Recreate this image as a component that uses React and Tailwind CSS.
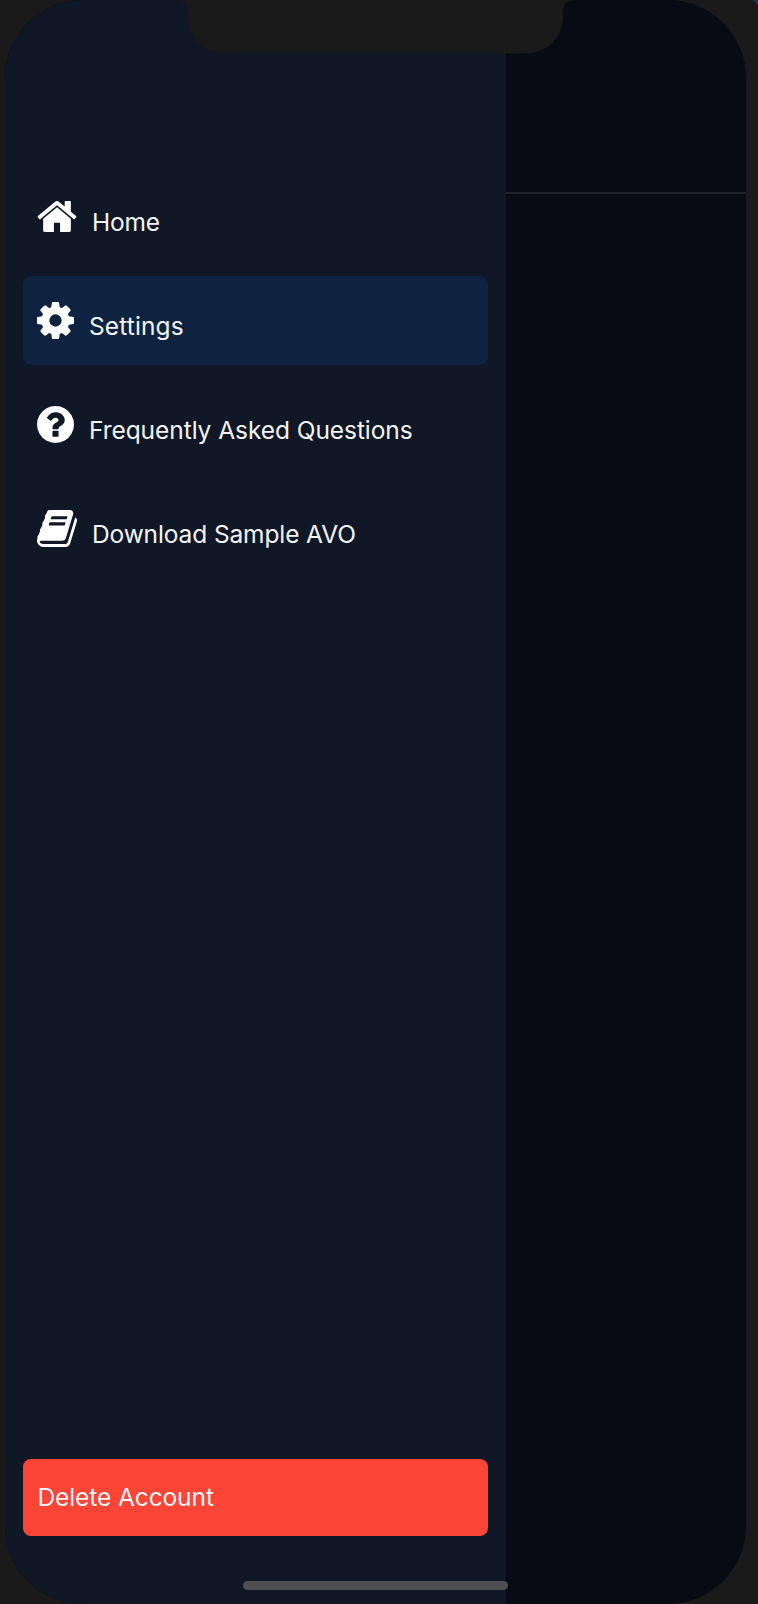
const icons = {
  home: {
    viewBox: "64 128 1664 1536",
    size: "w-10 h-[37px]",
    d: "M1472 992v480q0 26-19 45t-45 19h-384v-384h-256v384h-384q-26 0-45-19t-19-45v-480q0-1 .5-3t.5-3l575-474 575 474q1 2 1 6zm223-69l-62 74q-8 9-21 11h-3q-13 0-21-7l-692-577-692 577q-12 8-24 7-13-2-21-11l-62-74q-8-10-7-23.5t11-21.5l719-599q32-26 76-26t76 26l244 204v-195q0-14 9-23t23-9h192q14 0 23 9t9 23v408l219 182q10 8 11 21.5t-7 23.5z",
  },
  gear: {
    viewBox: "128 128 1536 1536",
    size: "w-[37px] h-[37px]",
    d: "M1152 896q0-106-75-181t-181-75-181 75-75 181 75 181 181 75 181-75 75-181zm512-109v222q0 12-8 23t-20 13l-185 28q-19 54-39 91 35 50 107 138 10 12 10 25t-9 23q-27 37-99 108t-94 71q-12 0-26-9l-138-108q-44 23-91 38-16 136-29 186-7 28-36 28h-222q-14 0-24.5-8.5t-11.5-21.5l-28-184q-49-16-90-37l-141 107q-10 9-25 9-14 0-25-11-126-114-165-168-7-10-7-23 0-12 8-23 15-21 51-66.5t54-70.5q-27-50-41-99l-183-27q-13-2-21-12.5t-8-23.5v-222q0-12 8-23t19-13l186-28q14-46 39-92-40-57-107-138-10-12-10-24 0-10 9-23 26-36 98.5-107.5t94.5-71.5q13 0 26 10l138 107q44-23 91-38 16-136 29-186 7-28 36-28h222q14 0 24.5 8.5t11.5 21.5l28 184q49 16 90 37l142-107q9-9 24-9 13 0 25 10 129 119 165 170 7 8 7 22 0 12-8 23-15 21-51 66.5t-54 70.5q26 50 41 98l183 28q13 2 21 12.5t8 23.5z",
  },
  question: {
    viewBox: "128 128 1536 1536",
    size: "w-[37px] h-[37px]",
    d: "M1024 1376v-192q0-14-9-23t-23-9h-192q-14 0-23 9t-9 23v192q0 14 9 23t23 9h192q14 0 23-9t9-23zm256-672q0-88-55.5-163t-138.5-116-170-41q-243 0-371 213-15 24 8 42l132 100q7 6 19 6 16 0 25-12 53-68 86-92 34-24 86-24 48 0 85.5 26t37.5 59q0 38-20 61t-68 45q-63 28-115.5 86.5t-52.5 125.5v36q0 14 9 23t23 9h192q14 0 23-9t9-23q0-19 21.5-49.5t54.5-49.5q32-18 49-28.5t46-35 44.5-48 28-60.5 12.5-81zm384 192q0 209-103 385.5t-279.5 279.5-385.5 103-385.5-103-279.5-279.5-103-385.5 103-385.5 279.5-279.5 385.5-103 385.5 103 279.5 279.5 103 385.5z",
  },
  book: {
    viewBox: "64 128 1664 1536",
    size: "w-10 h-[37px]",
    d: "M1703 478q40 57 18 129l-275 906q-19 64-76.5 107.5t-122.5 43.5h-923q-77 0-148.5-53.5t-99.5-131.5q-24-67-2-127 0-4 3-27t4-37q1-8-3-21.5t-3-19.5q2-11 8-21t16.5-23.5 16.5-23.5q23-38 45-91.5t30-91.5q3-10 .5-30t-.5-28q3-11 17-28t17-23q21-36 42-92t25-90q1-9-2.5-32t.5-28q4-13 22-30.5t22-22.5q19-26 42.5-84.5t27.5-96.5q1-8-3-25.5t-2-26.5q2-8 9-18t18-23 17-21q8-12 16.5-30.5t15-35 16-36 19.5-32 26.5-23.5 36-11.5 47.5 5.5l-1 3q38-9 51-9h761q74 0 114 56t18 130l-274 906q-36 119-71.5 153.5t-128.5 34.5h-869q-27 0-38 15-11 16-1 43 24 70 144 70h923q29 0 56-15.5t35-41.5l300-987q7-22 5-57 38 15 59 43zm-1064 2q-4 13 2 22.5t20 9.5h608q13 0 25.5-9.5t16.5-22.5l21-64q4-13-2-22.5t-20-9.5h-608q-13 0-25.5 9.5t-16.5 22.5zm-83 256q-4 13 2 22.5t20 9.5h608q13 0 25.5-9.5t16.5-22.5l21-64q4-13-2-22.5t-20-9.5h-608q-13 0-25.5 9.5t-16.5 22.5z",
  },
};

const items = [
  { icon: "home", label: "Home", spacing: "tracking-[-0.18px]" },
  { icon: "gear", label: "Settings", spacing: "tracking-[0.12px]", active: true },
  { icon: "question", label: "Frequently Asked Questions", spacing: "tracking-[-0.06px]" },
  { icon: "book", label: "Download Sample AVO", spacing: "tracking-[-0.12px]" },
];

function Icon({ name }) {
  const { viewBox, size, d } = icons[name];
  return (
    <svg viewBox={viewBox} preserveAspectRatio="none" fill="#ffffff" className={`shrink-0 ${size}`}>
      <path d={d} />
    </svg>
  );
}

function DrawerItem({ icon, label, spacing, active }) {
  return (
    <a className={`flex h-[89px] items-start rounded-lg pl-[14px] pt-[26px] ${active ? "bg-[#0e233f]" : ""}`}>
      <Icon name={icon} />
      <span className={`ml-[15px] mt-[9px] whitespace-nowrap text-[24.5px] leading-[30px] ${spacing}`}>{label}</span>
    </a>
  );
}

function Notch() {
  return (
    <svg viewBox="0 0 400 54" className="absolute left-[176px] top-0 h-[54px] w-[400px]" fill="#1a1a1a">
      <path d="M0 0C8 0 12 5 12 12V16C12 38 28 53.5 50 53.5H349C371 53.5 387 38 387 16V12C387 4 391 0 400 0Z" />
    </svg>
  );
}

export default function App() {
  return (
    <div className="relative h-[1604px] w-[758px] overflow-hidden bg-[#1a1a1a] pl-[5px] font-['Inter',sans-serif] text-[#f4f5f6]">
      <div className="flex h-full w-[741px] overflow-hidden rounded-[78px] bg-[#080b13]">
        <aside className="flex w-[501px] flex-col bg-[#101726] pb-[68px] pl-[18px] pr-[18px] pt-[172px]">
          <nav className="flex flex-col gap-[15px]">
            {items.map((item) => (
              <DrawerItem key={item.label} {...item} />
            ))}
          </nav>
          <button className="mt-auto flex h-[77px] items-center rounded-lg bg-[#f94436] pl-[14.5px] text-left text-[24.5px] tracking-[-0.1px]">
            Delete Account
          </button>
        </aside>
        <main className="flex-1">
          <div className="h-[194px] border-b-2 border-[#21232b]" />
        </main>
      </div>
      <Notch />
      <svg viewBox="0 0 5 5" className="absolute right-0 top-0 h-[5px] w-[5px]" fill="#1d3354">
        <path d="M0 0H5V5Z" />
      </svg>
      <div className="absolute left-[243px] top-[1581px] h-[9px] w-[265px] rounded-full bg-[#4f4f4f]" />
    </div>
  );
}
